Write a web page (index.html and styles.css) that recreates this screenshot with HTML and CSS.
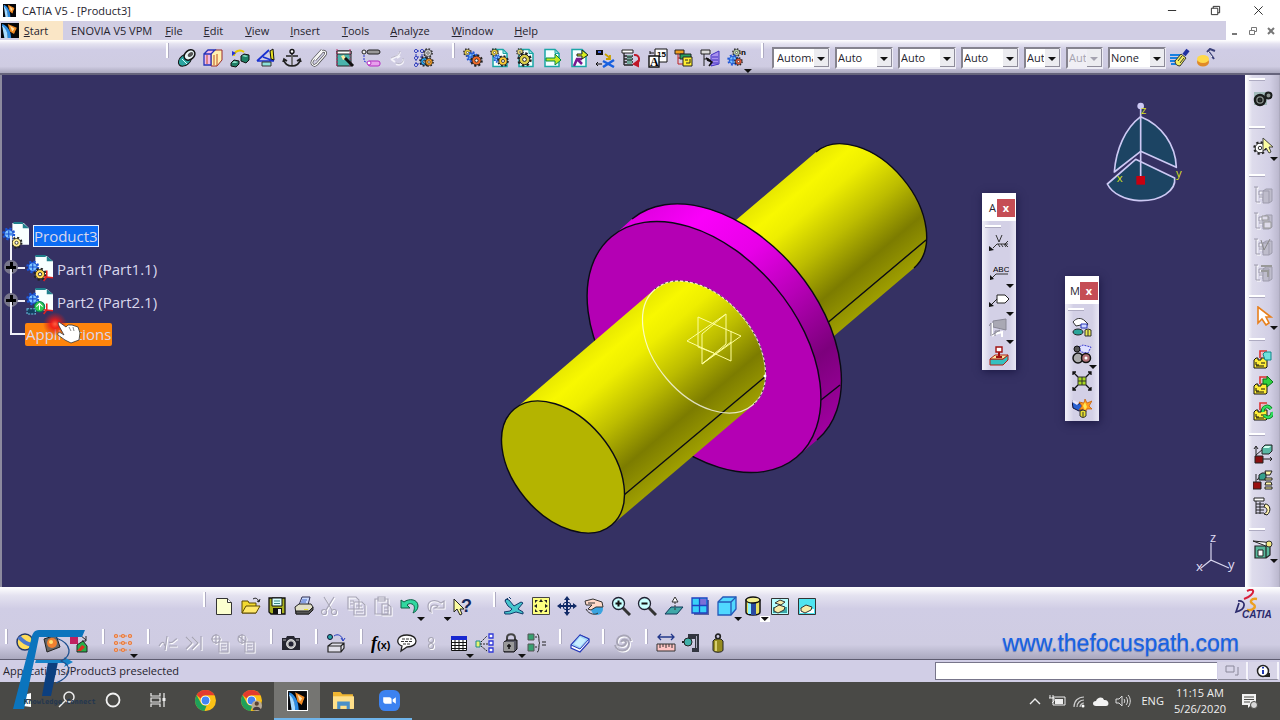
FILE: index.html
```html
<!DOCTYPE html>
<html lang="en">
<head>
<meta charset="utf-8">
<meta name="viewport" content="width=device-width, initial-scale=1">
<title>CATIA V5 - [Product3]</title>
<link rel="stylesheet" href="styles.css">
</head>
<body>
<svg class="defs" aria-hidden="true">
  <symbol id="cog" viewBox="0 0 12 12"><circle cx="6" cy="6" r="4.8" fill="none" stroke="#222" stroke-width="2" stroke-dasharray="1.900 1.870"/><circle cx="6" cy="6" r="4.100" fill="currentColor" stroke="#222" stroke-width=".8"/><circle cx="6" cy="6" r="1.500" fill="#fff" stroke="#222" stroke-width=".8"/></symbol>
  <symbol id="bluecog" viewBox="0 0 12 12"><circle cx="6" cy="6" r="4.800" fill="none" stroke="#1c55d8" stroke-width="2" stroke-dasharray="1.900 1.870"/><circle cx="6" cy="6" r="3.800" fill="#7fc4ff" stroke="#1850d0"/><path d="M3 6h6M6 3v6" stroke="#1850d0"/></symbol>
  <symbol id="catia" viewBox="0 0 16 16"><path fill="#05060a" d="M0 0h16v16H0z"/><path fill="#2b8ae0" d="M1 1c5 2 8 8 8 15H6C6 10 4 6 1 4z"/><path fill="#a8dcff" d="M1 3c3 2 5 7 5 13H3z"/><path fill="#f08a24" d="M6 1l8 4-2 7-4-3z"/><path fill="#ffe2a8" d="M8 3l4 3-2 3z"/><path fill="#05060a" d="M13 8l3-2v10h-6z"/></symbol>
  <symbol id="page" viewBox="0 0 20 20"><path fill="#f4ffff" stroke="#1aa6a6" stroke-width="1.500" d="M3 1.500h10l4 4v13H3z"/><path fill="#9fe0e0" stroke="#1aa6a6" d="M13 1.500v4h4z"/></symbol>
  <symbol id="dockgrey" viewBox="0 0 20 20"><g fill="none" stroke="#fff" transform="translate(1 1)"><path d="M1 2h4M3 2v15h4M6 6h5v4H6zM6 12h4v4"/></g><g fill="none" stroke="#9d9bac"><path d="M1 2h4M3 2v15h4M6 6h5v4H6zM6 12h4v4"/><path fill="#bebccb" d="M10 6l3-2h6v12l-3 2h-6zM10 6h6v12"/></g></symbol>
  <symbol id="chrome" viewBox="0 0 20 20"><circle cx="10" cy="10" r="10" fill="#fbc116"/><path fill="#e33b2e" d="M10 0a10 10 0 0 1 8.700 5H10a5 5 0 0 0-4.600 3L1.500 4.800A10 10 0 0 1 10 0z"/><path fill="#1fa15a" d="M1.500 4.800l4.200 7.700A5 5 0 0 0 11 15l-2 5A10 10 0 0 1 1.500 4.800z"/><circle cx="10" cy="10" r="4.600" fill="#fff"/><circle cx="10" cy="10" r="3.700" fill="#4384f3"/></symbol>
  <symbol id="yblock" viewBox="0 0 20 20"><path fill="none" stroke="#e03030" stroke-width="1.600" d="M7 9V2h7"/><path fill="none" stroke="#f9a0a0" d="M9 9V4h5"/><path fill="#ffee38" stroke="#111" d="M1 11l2-2h2v2h3V9h6v9l-1 1H1z"/><path fill="none" stroke="#111" d="M3 13v3h3M8 14h4M3 17h8"/></symbol>
</svg>

<header class="titlebar">
  <svg class="appicon" viewBox="0 0 16 16" aria-hidden="true"><use href="#catia"/></svg>
  <h1>CATIA V5 - [Product3]</h1>
  <div class="winbtns">
    <button aria-label="Minimize"><svg viewBox="0 0 12 12"><path d="M1 6h9"/></svg></button>
    <button aria-label="Restore"><svg viewBox="0 0 12 12"><path d="M1.500 3.500h7v7h-7zM3.500 3.500v-2h7v7h-2"/></svg></button>
    <button aria-label="Close"><svg viewBox="0 0 12 12"><path d="M1.500 1.500l9 9M10.500 1.500l-9 9"/></svg></button>
  </div>
</header>

<nav class="menubar" aria-label="Main menu">
  <svg class="docicon" viewBox="0 0 16 16" preserveAspectRatio="none" aria-hidden="true"><use href="#catia"/></svg>
  <button class="start"><u>S</u>tart</button>
  <button>ENOVIA V5 VPM</button>
  <button class="file"><u>F</u>ile</button>
  <button><u>E</u>dit</button>
  <button><u>V</u>iew</button>
  <button><u>I</u>nsert</button>
  <button><u>T</u>ools</button>
  <button><u>A</u>nalyze</button>
  <button><u>W</u>indow</button>
  <button><u>H</u>elp</button>
  <div class="mdibtns">
    <button aria-label="Minimize document"><svg viewBox="0 0 10 10"><path d="M2 8h5"/></svg></button>
    <button aria-label="Restore document"><svg viewBox="0 0 10 10"><path stroke-width="1" d="M1.500 4.500h5v4h-5zM3.500 4V1.500h5v4H7"/></svg></button>
    <button aria-label="Close document"><svg viewBox="0 0 10 10"><path d="M2 2l6 6M8 2l-6 6"/></svg></button>
  </div>
</nav>

<div class="toolbar top">
  <div class="group constraints">
    <button aria-label="Coincidence"><svg viewBox="0 0 20 20"><ellipse cx="8" cy="12" rx="7.500" ry="5" transform="rotate(-40 8 12)" fill="#2aa5a0" stroke="#111"/><ellipse cx="12.500" cy="7" rx="6" ry="4.500" transform="rotate(-40 12.500 7)" fill="#e8f4f4" stroke="#111" stroke-width="1.500"/><ellipse cx="13.500" cy="6.500" rx="3" ry="2" transform="rotate(-40 13.500 6.500)" fill="#555"/><path d="M5 11l5 5" stroke="#d8ffff"/></svg></button>
    <button aria-label="Contact"><svg viewBox="0 0 20 20"><path fill="#fff3b0" stroke="#9a2a2a" d="M8 6l4-4h7v10l-5 6H8z"/><path fill="#f3b8e8" stroke="#2734b8" stroke-width="1.300" d="M1 6h7v11H1zM1 6l4-4h7L8 6"/><path d="M4 7v9M11 7v10M14 6v12" stroke="#c05020"/></svg></button>
    <button aria-label="Offset"><svg viewBox="0 0 20 20"><path d="M4 8c0-5 6-7 10-4" fill="none" stroke="#e6c800" stroke-width="2"/><path fill="#1f7f66" stroke="#111" d="M11 8l3-2 5 1v5l-3 3-5-2zM1 15l3-3 5 1v3l-3 3-5-1z"/><path d="M12 8l2-1 4 1-2 1zM2 15l2-2 4 1-2 1z" fill="#8fe0c8"/><path d="M2 3l4 2-4 3z" fill="#2734d8"/></svg></button>
    <button aria-label="Angle"><svg viewBox="0 0 20 20"><path d="M1 13L13 2M1 13h17M7 9l11 4" stroke="#1830d0" stroke-width="1.700" fill="none"/><path fill="#8ce0d8" stroke="#333" d="M6 14h9v4H6z"/><path fill="#e8e020" stroke="#111" d="M14 3l3-2 1 11-3-1z"/></svg></button>
    <button aria-label="Fix"><svg viewBox="0 0 20 20"><circle cx="10" cy="3.500" r="2" fill="#fff" stroke="#111" stroke-width="1.400"/><path d="M10 6v12M4 8h12M2 12c1 5 5 6 8 6s7-1 8-6M1 14l1-3 3 2M19 14l-1-3-3 2" stroke="#222" stroke-width="1.600" fill="none"/><path d="M10 7v10" stroke="#eee" stroke-width=".6"/></svg></button>
    <button aria-label="Fix together"><svg viewBox="0 0 20 20"><path d="M6 12l7-8c2-2 5 0 3 3l-8 9c-3 3-7 0-4-4L13 2" stroke="#444" stroke-width="2.600" fill="none"/><path d="M6 12l7-8c2-2 5 0 3 3l-8 9c-3 3-7 0-4-4L13 2" stroke="#fff" stroke-width="1.200" fill="none"/></svg></button>
    <button aria-label="Quick constraint"><svg viewBox="0 0 20 20"><path fill="#4ab3ac" stroke="#222" d="M2 3h14v15H2z"/><path fill="#fff" stroke="#222" d="M2 3h14v3H2z"/><path d="M2 1v17M15 1v17" stroke="#b8306a" stroke-dasharray="2 1"/><path fill="#ffe9a0" d="M6 8l3-1 2 4-3 1z"/><path d="M10 10l8 8" stroke="#111" stroke-width="3"/></svg></button>
    <button aria-label="Flexible assembly"><svg viewBox="0 0 20 20"><rect x="6" y="2" width="13" height="4" rx="2" fill="#999" stroke="#222"/><circle cx="3" cy="4" r="2" fill="#eee" stroke="#222"/><path d="M3 7v6l4 2" stroke="#2734d8" fill="none" stroke-dasharray="2 1"/><rect x="7" y="13" width="12" height="5" rx="2" fill="#e7a0ec" stroke="#b22ac0"/><circle cx="8" cy="15" r="2" fill="#fff" stroke="#b22ac0"/></svg></button>
    <button aria-label="Change constraint" disabled><svg viewBox="0 0 20 20"><path d="M3 11c4-2 8-2 9-7M8 16c5 2 8-1 7-5M3 11l4 3M12 8l-3 2" fill="none" stroke="#f4f3fa" stroke-width="2"/><path d="M3 10c4-2 8-2 9-7M8 15c5 2 8-1 7-5" fill="none" stroke="#b6b3c4"/></svg></button>
    <button aria-label="Reuse pattern"><svg viewBox="0 0 20 20"><path d="M2 2v16M8 2v16M2 3h12M2 9h8M2 16h8" stroke="#2734b8" stroke-dasharray="3 1"/><g fill="#fff" stroke="#2734b8"><circle cx="2" cy="3" r="1.500"/><circle cx="8" cy="3" r="1.500"/><circle cx="2" cy="10" r="1.500"/><circle cx="2" cy="17" r="1.500"/></g><use href="#cog" x="9" y="0" width="10" height="10" color="#ddd"/><use href="#cog" x="5" y="8" width="11" height="11" color="#20a0f0"/><use href="#cog" x="10" y="9" width="10" height="10" color="#ffa020"/></svg></button>
  </div>
  <div class="group structure">
    <button aria-label="Component"><svg viewBox="0 0 20 20"><use href="#cog" x="0" y="0" width="9" height="9" color="#ffe040"/><use href="#bluecog" x="3" y="3" width="12" height="12"/><use href="#cog" x="7" y="6" width="13" height="13" color="#f06a28"/></svg></button>
    <button aria-label="Product"><svg viewBox="0 0 20 20"><use href="#page" width="20" height="20"/><use href="#cog" x="0" y="0" width="9" height="9" color="#ffe040"/><use href="#bluecog" x="3" y="6" width="9" height="9"/><use href="#cog" x="7" y="7" width="12" height="12" color="#ffcb30"/></svg></button>
    <button aria-label="Part"><svg viewBox="0 0 20 20"><use href="#page" width="20" height="20"/><use href="#cog" x="0" y="0" width="8" height="8" color="#ffee80"/><use href="#cog" x="1" y="4" width="15" height="15" color="#ddd04a"/></svg></button>
    <button aria-label="Existing component"><svg viewBox="0 0 20 20"><use href="#page" width="20" height="20"/><path fill="#c9e820" stroke="#084" d="M4 10h9V6l6 6-6 5v-4H4z"/></svg></button>
    <button aria-label="Existing component with positioning"><svg viewBox="0 0 20 20"><use href="#page" width="20" height="20"/><path d="M5 18l3-7 5 0M8 11l5 5" stroke="#7a1890" stroke-width="2.500" fill="none"/><path fill="#d8f020" stroke="#222" d="M8 6h5V2l6 5-6 4V8H8z"/></svg></button>
    <button aria-label="Replace component"><svg viewBox="0 0 20 20"><path fill="#111" d="M1 2h7v5H1z"/><path fill="#4060e0" d="M3 3h3v2H3z"/><path d="M10 6l5 4M15 7v4h-4" stroke="#c8a000" stroke-width="1.800" fill="none"/><path d="M1 16h6M1 16l2-2M1 16l2 2" stroke="#111"/><path d="M8 13l11 6M19 12l-11 7" stroke="#1860e0" stroke-width="2.500"/></svg></button>
    <button aria-label="Graph tree reordering"><svg viewBox="0 0 20 20"><path fill="#fff" stroke="#222" d="M1 2h11v3H1z"/><path d="M3 5v12M3 8h9M3 11h9M3 14h9M3 17h9" stroke="#222" stroke-width="1.300"/><path d="M6 7h5v9H6z" fill="#6fa89a"/><path d="M6 9h5M6 12h5" stroke="#222"/><path d="M13 7c6-1 7 7 1 9M13 16l4-3v5z" fill="none" stroke="#c01828" stroke-width="2"/></svg></button>
    <button aria-label="Generate numbering"><svg viewBox="0 0 20 20"><path fill="#fff" stroke="#111" d="M7 1h12v13H7z"/><text x="9" y="9" class="ic8">15</text><path fill="#fff" stroke="#111" stroke-width="1.400" d="M1 8h10v11H1z"/><text x="2" y="18" class="serif">A</text><path d="M2 5h4M2 3v3" stroke="#111"/></svg></button>
    <button aria-label="Selective load"><svg viewBox="0 0 20 20"><path fill="#f0a020" stroke="#222" d="M1 2h9v4H1z"/><path d="M4 6v10h5M4 10h4" stroke="#c02020" fill="none"/><path fill="#28a05c" stroke="#222" d="M6 6h11v5H6z"/><path fill="#ffee30" stroke="#222" d="M9 9h9v9H9z"/><path d="M11 12h3M12 15h4v-4" stroke="#222" fill="none"/></svg></button>
    <button aria-label="Manage representations"><svg viewBox="0 0 20 20"><path d="M1 2h9v4H1zM4 6v12M4 11h5" stroke="#222" fill="#ddd"/><path fill="#a890ee" stroke="#4030c0" d="M11 7l8-4v13l-8 2z"/><path d="M12 9h6M12 12h6M12 15h6" stroke="#4030c0"/><path d="M7 12l5 2-3 4M6 10l5 3" stroke="#111" stroke-width="1.500" fill="none"/></svg></button>
    <button class="drop" aria-label="Multi instantiation"><svg viewBox="0 0 20 20"><use href="#cog" x="5" y="0" width="9" height="9" color="#c8e0b0"/><use href="#bluecog" x="0" y="6" width="12" height="12"/><use href="#cog" x="7" y="9" width="9" height="9" color="#f05a38"/><text x="14" y="7" class="ic8">n</text></svg></button>
  </div>
  <div class="group combos">
    <span class="combo first"><select aria-label="Fill colour"><option>Automatic</option></select></span>
    <span class="combo"><select aria-label="Transparency"><option>Auto</option></select></span>
    <span class="combo"><select aria-label="Line thickness"><option>Auto</option></select></span>
    <span class="combo"><select aria-label="Line type"><option>Auto</option></select></span>
    <span class="combo small"><select aria-label="Point symbol"><option>Auto</option></select></span>
    <span class="combo small"><select aria-label="Rendering style" disabled><option>Auto</option></select></span>
    <span class="combo layer"><select aria-label="Layer"><option>None</option></select></span>
    <button aria-label="Painter"><svg viewBox="0 0 20 20"><path d="M0 7h10M0 10h9M0 13h9M1 16h10" stroke="#1880e0" stroke-width="2"/><path fill="#f4ee60" stroke="#333" d="M5 13l6-7 5 4-6 8c-3 0-5-2-5-5z"/><path d="M8 13l4-5M10 15l4-5" stroke="#333"/><path d="M14 7l4-5" stroke="#2030a0" stroke-width="4"/></svg></button>
    <button aria-label="Wizard"><svg viewBox="0 0 20 20"><ellipse cx="7" cy="14" rx="6" ry="4.500" fill="#e08a28"/><ellipse cx="7" cy="11" rx="6" ry="4" fill="#ffd94a"/><path d="M11 4l3-3 5 2M13 4l5 7" stroke="#3a3f78" stroke-width="2" fill="none"/><path d="M12 4l4 5" stroke="#fff"/></svg></button>
  </div>
</div>

<main class="work">
  <section class="viewport" aria-label="3D view">
    <svg class="model" viewBox="0 75 1245 512" role="img" aria-label="Shaft with disc">
      <defs>
        <linearGradient id="shaft" gradientUnits="userSpaceOnUse" x1="514" y1="409" x2="612" y2="525"><stop offset="0" stop-color="#e8e800"/><stop offset=".12" stop-color="#f8f800"/><stop offset=".25" stop-color="#eeee00"/><stop offset=".5" stop-color="#bcbc00"/><stop offset=".76" stop-color="#7c7c00"/><stop offset="1" stop-color="#a0a000"/></linearGradient>
        <linearGradient id="rim" gradientUnits="userSpaceOnUse" x1="632" y1="219" x2="817" y2="440"><stop offset="0" stop-color="#e000e0"/><stop offset=".15" stop-color="#fa00fa"/><stop offset=".35" stop-color="#e800e8"/><stop offset=".55" stop-color="#b800b8"/><stop offset=".78" stop-color="#7c007c"/><stop offset="1" stop-color="#a000a0"/></linearGradient>
      </defs>
      <g stroke-width="1.400">
        <path fill="url(#shaft)" d="M655 289L816 152A75.700 49 50 0 1 914 268L753 405z"/>
        <path fill="none" stroke="#0a0a14" d="M816 152A75.700 49 50 0 1 914 268M926 240L800 346"/>
        <path fill="url(#rim)" d="M612 237L632 219A144 93.200 50 0 1 817 440L797 457z"/>
        <path fill="none" stroke="#0a0a14" d="M632 219A144 93.200 50 0 1 817 440M821 400L840 385"/>
        <ellipse cx="704" cy="347" rx="144" ry="93.200" transform="rotate(50 704 347)" fill="#b400b4" stroke="#0a0a14"/>
        <path fill="url(#shaft)" d="M515 409L655 289A75.700 49 50 0 1 753 405L612 525z"/>
        <path stroke="#0a0a14" d="M624 495L766 376"/>
        <ellipse cx="563" cy="467" rx="75.700" ry="49" transform="rotate(50 563 467)" fill="#b4b400" stroke="#0a0a14"/>
        <ellipse cx="704" cy="347" rx="75.700" ry="49" transform="rotate(50 704 347)" fill="none" stroke="#fff" stroke-width="1.200" stroke-opacity=".75"/>
        <path fill="none" stroke="#222" stroke-width="1" stroke-dasharray="2 3" d="M655 289A75.700 49 50 0 1 753 405"/>
      </g>
      <path fill="none" stroke="#ffff9c" d="M698 317v30l16 6M698 317l43 19-39 28v-30l24-20v30l-24 20M687 341l39-27M687 341l44 20v-30M702 364l29-22"/>
      <circle cx="765" cy="376" r="1.500" fill="#fff"/>
    </svg>

    <ul class="tree">
      <li class="root">
        <svg viewBox="0 0 26 26"><path fill="#f8ffff" d="M10 1h11l5 5v16H10z"/><path fill="#207f8c" d="M11 0h9v2h-9zM20 1l6 5h-6z"/><use href="#bluecog" x="0" y="5" width="13" height="13"/><use href="#cog" x="8" y="14" width="12" height="12" color="#ffef90"/></svg>
        <span class="sel">Product3</span>
      </li>
      <li>
        <i class="plus"></i>
        <svg viewBox="0 0 26 26"><path fill="#f8ffff" d="M9 1h11l6 5v16H9z"/><path fill="#207f8c" d="M9 0h10v2H9zM20 1l6 5h-6z"/><use href="#bluecog" x="0" y="5" width="13" height="13"/><use href="#cog" x="7" y="12" width="13" height="13" color="#ffd850"/><path d="M17 21l9 1M20 15v6l-3 4" stroke="#e02020" stroke-width="1.500" fill="none"/></svg>
        <span>Part1 (Part1.1)</span>
      </li>
      <li>
        <i class="plus"></i>
        <svg viewBox="0 0 26 26"><path fill="#f8ffff" d="M9 1h11l6 5v16H9z"/><path fill="#207f8c" d="M9 0h10v2H9zM20 1l6 5h-6z"/><use href="#bluecog" x="0" y="4" width="13" height="13"/><circle cx="13" cy="18" r="5" fill="#30c850" stroke="#075"/><path d="M10 18l3-3 3 3M13 15v6" stroke="#fff" fill="none"/><path d="M1 20h8v5H1z" fill="#123f60" stroke="#6bc0e0" stroke-dasharray="2 1"/><path d="M17 21l9 1M20 15v6l-3 4" stroke="#e02020" stroke-width="1.500" fill="none"/></svg>
        <span>Part2 (Part2.1)</span>
      </li>
      <li><span class="app">Applications</span></li>
    </ul>
    <svg class="pointer" viewBox="0 0 50 36" aria-hidden="true"><defs><radialGradient id="click"><stop offset="0" stop-color="#ff6040"/><stop offset=".35" stop-color="#f01818" stop-opacity=".9"/><stop offset="1" stop-color="#c02020" stop-opacity="0"/></radialGradient></defs><circle cx="13" cy="13" r="12" fill="url(#click)"/><path fill="#fff" stroke="#333" stroke-width=".8" d="M17 11l7 5 2-2 4 0 3 1 3 1 2 6-1 7-8 3-6-3-7-5c-1-2 1-3 3-2l3 2-5-9c-1-2-1-4 0-4z"/><path d="M27 16l2 4M31 16l1 4" stroke="#888"/></svg>

    <svg class="compass" viewBox="0 0 330 360" aria-label="Compass"><g fill="#1c4463" stroke="#cdc9f4" stroke-width="5" stroke-linejoin="round"><path d="M152 80C105 115 78 180 73 246L152 184l107 48C257 165 215 105 152 80z"/><path d="M137 208L52 282c15 30 55 48 95 50 65 2 112-30 107-68z"/><path d="M152 50v210" fill="none"/></g><circle cx="152" cy="48" r="10" fill="#cdc9f4"/><path fill="#c80010" d="M139 258h26v26h-26z"/><g fill="#d8e020" class="axis-lg"><text x="153" y="73">z</text><text x="80" y="276">x</text><text x="258" y="262">y</text></g></svg>

    <svg class="triad" viewBox="0 0 44 50" aria-label="Axes"><path d="M17 18v17l18 8M17 35L7 43" fill="none" stroke="#d8d6ee" stroke-width="1.200"/><g fill="#e0def4" class="axis-sm"><text x="16" y="17">z</text><text x="2" y="46">x</text><text x="34" y="44">y</text></g></svg>

    <aside class="palette annotations" aria-label="Annotations">
      <div class="ptitle"><b>A</b><button aria-label="Close Annotations">x</button></div>
      <div class="ptools">
        <button aria-label="Weld feature"><svg viewBox="0 0 20 20"><path d="M7 1l3 7 3-7M4 14l4-4h11M9 10l2 3M12 10l2 3M15 10l2 3M19 7l-3 3 3 3" fill="none" stroke="#333"/><path fill="#111" d="M0 17v-5l5 4z"/></svg></button>
        <button class="drop" aria-label="Text with leader"><svg viewBox="0 0 20 20"><text x="4" y="10" class="ic9">ABC</text><path d="M3 16l4-4h12" fill="none" stroke="#333"/><path fill="#111" d="M1 18v-5l4 4z"/></svg></button>
        <button class="drop" aria-label="Flag note"><svg viewBox="0 0 20 20"><path d="M8 5h8l4 4-4 4H8zM8 9l-6 6" fill="#fff" stroke="#222"/><path fill="#111" d="M0 17v-5l5 4z"/></svg></button>
        <button class="drop" aria-label="View"><svg viewBox="0 0 20 20"><path fill="#a9a8b4" stroke="#888795" d="M4 3l13-2v11L4 9z"/><path fill="none" stroke="#fff" stroke-width="2" d="M3 18V5M3 18l8-5M6 16l7-2v5"/><path fill="none" stroke="#888795" d="M2 18V5l-2 3M3 17l8-5M6 18v-5h5"/></svg></button>
        <button aria-label="3D annotation"><svg viewBox="0 0 20 20"><path fill="#35c0c0" stroke="#b02010" d="M1 13h13l5-4v5l-5 5H1z"/><path fill="#f4e6a0" stroke="#b02010" d="M1 13l5-4h13l-5 4z"/><path fill="#fff" stroke="#a01010" stroke-width="1.400" d="M7 1h6v5H7z"/><path d="M10 6v5M7 11h6" stroke="#a01010" stroke-width="2"/></svg></button>
      </div>
    </aside>

    <aside class="palette move" aria-label="Move">
      <div class="ptitle"><b>M</b><button aria-label="Close Move">x</button></div>
      <div class="ptools">
        <button aria-label="Manipulation"><svg viewBox="0 0 20 20"><path fill="#fff" stroke="#333" d="M1 5c3-4 8-5 12-1l3 3-3 4-4-3-5 1z"/><path fill="#cfd8ff" stroke="#2734b8" d="M9 7h6v4H9z"/><ellipse cx="6" cy="15" rx="5" ry="3" fill="#2aa59a" stroke="#222"/><path fill="#e8e850" stroke="#333" d="M13 13l3-1 3 1v6h-6zM16 13v6"/></svg></button>
        <button class="drop" aria-label="Snap"><svg viewBox="0 0 20 20"><path fill="#dfe0ff" stroke="#3a3ad0" stroke-dasharray="2 1" d="M7 3l4-2 8 2-3 6-7-1z"/><circle cx="5" cy="5" r="3" fill="#555" stroke="#111"/><circle cx="6" cy="14" r="5" fill="#aaa" stroke="#111" stroke-width="1.500"/><circle cx="14" cy="14" r="4.500" fill="#b07078" stroke="#111" stroke-width="1.500"/><circle cx="14" cy="14" r="1.500" fill="#fff"/></svg></button>
        <button aria-label="Explode"><svg viewBox="0 0 20 20"><path d="M1 1l5 5M19 1l-5 5M1 19l5-5M19 19l-5-5M1 4V1h3M16 1h3v3M1 16v3h3M16 19h3v-3" stroke="#111" fill="none" stroke-width="1.300"/><path fill="#a8d820" stroke="#333" d="M6 6h8v8H6zM10 6v8M6 10h8"/></svg></button>
        <button aria-label="Stop on clash"><svg viewBox="0 0 20 20"><path fill="#2860d0" stroke="#113" d="M0 3l6 3 4-1 1 6-4 2-6-3z"/><path fill="#e8e6fa" d="M1 2l6 3-2 2-5-3z"/><path fill="#ff9a20" stroke="#c05a00" stroke-width=".7" d="M13 1l2 4 5-2-3 5 3 3-5 0-2 4-2-4-4 1 3-4-3-4 5 1z"/><path fill="#ffe850" d="M13 4l2 5-2 3-2-4z"/><path fill="#e8e030" stroke="#333" d="M8 13l3-1 3 1v5l-3 2-3-2zM11 14v5"/></svg></button>
      </div>
    </aside>
  </section>

  <aside class="dock" aria-label="Product tools">
    <div class="vgroup roomy"><button aria-label="Workbench"><svg viewBox="0 0 20 20"><path fill="#7fa99c" d="M1 3h13v13H1z" opacity=".6"/><g fill="#8b938f" stroke="#1a1d1c" stroke-width="2"><circle cx="7" cy="11" r="5" stroke-width="2.500"/><circle cx="7" cy="11" r="1.500"/><circle cx="15.500" cy="6.500" r="3"/></g></svg></button></div>
    <div class="vgroup roomy"><button class="drop" aria-label="Select product"><svg viewBox="0 0 20 20"><use href="#cog" x="0" y="4" width="14" height="14" color="#fff"/><path fill="#fbfca0" stroke="#444" d="M10 1v13l3-3 3 5 2-1-2-5h4z"/></svg></button></div>
    <div class="vgroup">
      <button disabled aria-label="Load"><svg viewBox="0 0 20 20"><use href="#dockgrey" width="20" height="20"/></svg></button>
      <button disabled aria-label="Unload"><svg viewBox="0 0 20 20"><use href="#dockgrey" width="20" height="20"/><path d="M9 5h6v4H9zM11 11h7v6h-7z" fill="#dedbea" stroke="#999"/></svg></button>
      <button disabled aria-label="Activate"><svg viewBox="0 0 20 20"><use href="#dockgrey" width="20" height="20"/><path d="M8 3l3 10 6-11" fill="none" stroke="#888"/></svg></button>
      <button disabled aria-label="Deactivate"><svg viewBox="0 0 20 20"><use href="#dockgrey" width="20" height="20"/><path d="M8 3h11M8 8h7v6" fill="none" stroke="#999" stroke-width="2"/></svg></button>
    </div>
    <div class="vgroup"><button class="drop" aria-label="Select"><svg viewBox="0 0 20 20"><path fill="#fff" stroke="#e8801c" stroke-width="1.600" d="M5 1v16l4-4 4 6 3-2-3-6h5z"/></svg></button></div>
    <div class="vgroup">
      <button aria-label="Publish"><svg viewBox="0 0 20 20"><use href="#yblock" width="20" height="20"/><path fill="#70e0dc" stroke="#108888" d="M10 5l2-2h6v8h-6z"/></svg></button>
      <button aria-label="Send"><svg viewBox="0 0 20 20"><use href="#yblock" width="20" height="20"/><path fill="#30d040" stroke="#087818" d="M10 4h4V1l6 6-6 5V9h-4z"/></svg></button>
      <button aria-label="Synchronise"><svg viewBox="0 0 20 20"><use href="#yblock" width="20" height="20"/><path d="M18 8c-3-5-9-2-8 3M11 14c4 5 9 1 8-3" fill="none" stroke="#087818" stroke-width="3.500"/><path d="M18 8c-3-5-9-2-8 3M11 14c4 5 9 1 8-3" fill="none" stroke="#30e060" stroke-width="2"/></svg></button>
    </div>
    <div class="vgroup">
      <button aria-label="Translate"><svg viewBox="0 0 20 20"><path d="M3 13V3M1 5l2-3 2 3M3 11l7-6M9 15h10M17 13l2 2-2 2" stroke="#222" fill="none"/><path fill="#58b8a4" stroke="#222" d="M9 4l3-3h7v6l-3 3H9z"/><path fill="#d4fff0" d="M10 4l2-2h6l-2 2z"/><path fill="#8a1010" stroke="#222" d="M2 12h8v7H2z"/></svg></button>
      <button aria-label="Compare"><svg viewBox="0 0 20 20"><path d="M3 12V4M4 10l5-6" stroke="#222"/><path fill="#35a08c" stroke="#222" d="M6 5l3-2h4v7H6z"/><path fill="#981010" stroke="#222" d="M0 12h8v7H0z"/><path fill="#fff7a8" stroke="#222" d="M12 1h7l-2 4h-4zM12 8h7v2h-7zM13 12h5l1 3h-7zM12 17h7v2h-7z"/></svg></button>
      <button aria-label="Tree update"><svg viewBox="0 0 20 20"><path fill="#fff" stroke="#222" d="M1 2h10v3H1z"/><path d="M3 5v13M3 8h8M3 11h8M3 14h8M3 17h8M7 6v12" stroke="#222"/><path fill="#fff4b0" stroke="#222" d="M12 8c5 0 7 7 2 11l-3-1c4-2 4-6 0-7z"/></svg></button>
    </div>
    <div class="vgroup"><button class="drop" aria-label="Catalog"><svg viewBox="0 0 20 20"><path fill="#58b89c" stroke="#222" stroke-width="1.200" d="M2 7h11v12H2zM13 7l4-2v11l-4 3"/><path fill="#fff" stroke="#222" d="M0 2l13 5 5-3-7-1zM5 11h5v6H5z"/><circle cx="16" cy="5" r="3" fill="#f0e880" stroke="#333"/></svg></button></div>
  </aside>
</main>

<div class="toolbar bottom">
  <div class="row one">
    <div class="group std">
      <button aria-label="New"><svg viewBox="0 0 20 20"><path fill="#fcffd0" stroke="#333" d="M2.500 2.500h11l4 4v12h-15z"/><path fill="#fff" stroke="#333" d="M13.500 2.500v4h4"/></svg></button>
      <button aria-label="Open"><svg viewBox="0 0 20 20"><path fill="#f2d930" stroke="#5c4b00" d="M1 5h6l1 2h7v10H1z"/><path fill="#ffe86a" stroke="#5c4b00" d="M1 17l4-7h14l-4 7z"/><path d="M12 3c3-2 5 0 6 3M16 5l2 1 1-3" stroke="#222" fill="none"/></svg></button>
      <button aria-label="Save"><svg viewBox="0 0 20 20"><path fill="#a8b020" stroke="#111" stroke-width="1.300" d="M2 2h16v16H4l-2-2z"/><path fill="#d8ffff" stroke="#111" d="M5 2h10v8H5z"/><path fill="#111" d="M6 12h9v6H6z"/><path fill="#eee" d="M11 13h3v5h-3z"/><path d="M7 5h6M7 7.500h6" stroke="#3a8888"/></svg></button>
      <button aria-label="Print"><svg viewBox="0 0 20 20"><path fill="#c9d9ff" stroke="#335" d="M5 9l3-8h8l-2 8z"/><path fill="#e2e0c8" stroke="#222" d="M1 11l4-3h12l2 3-4 7H2z"/><path fill="#555" stroke="#222" d="M2 15h13l4-4v3l-4 4H2z"/><path d="M8 4h5M7 6h5" stroke="#4468c8"/><path fill="#e8e030" d="M10 13h4v1h-4z"/></svg></button>
      <button disabled aria-label="Cut"><svg viewBox="0 0 20 20" class="off"><path d="M4 1l8 13M14 1L6 14"/><circle cx="4" cy="16" r="2.500"/><circle cx="14" cy="16" r="2.500"/></svg></button>
      <button disabled aria-label="Copy"><svg viewBox="0 0 20 20" class="off"><path d="M1 1h8l3 3v9H1zM7 6h8l3 3v10H7zM9 10h6M9 13h7M9 16h7M3 5h4M3 8h3"/></svg></button>
      <button disabled aria-label="Paste"><svg viewBox="0 0 20 20" class="off"><path d="M2 3h13v15H2zM5 1h7v4H5zM9 8h6l3 3v8H9zM11 12h4M11 15h5"/></svg></button>
      <button class="drop" aria-label="Undo"><svg viewBox="0 0 20 20"><path fill="#30d8a0" stroke="#0c6044" d="M1 12V4l3 2c5-4 14-3 14 4 0 4-3 6-5 7 2-4 2-8-1-9-2-1-4 0-5 1l3 3z"/></svg></button>
      <button disabled class="drop" aria-label="Redo"><svg viewBox="0 0 20 20" class="off"><path d="M18 12V5l-3 2C10 3 2 4 2 10c0 3 1 5 3 6-1-4 0-7 3-7 2 0 3 0 4 1l-3 2z"/></svg></button>
      <button aria-label="What's this"><svg viewBox="0 0 20 20"><path fill="#fbfca0" stroke="#222" d="M1 3v13l3-3 3 6 2-1-2-5h4z"/><text x="8" y="16" class="ic20">?</text></svg></button>
    </div>
    <div class="group viewtools">
      <button aria-label="Fly mode"><svg viewBox="0 0 20 20"><path fill="#45c4cc" stroke="#113a6a" d="M2 3l3 1 5 6 7-4 2 1-5 6 5 3 0 2-7-2-6 2-5 0-1-2 6-1 2-2-4-3-3-5z"/><path d="M4 2l-3 3M5 1l2 2" stroke="#113a6a"/></svg></button>
      <button aria-label="Fit all in"><svg viewBox="0 0 20 20"><path fill="#fdff80" stroke="#444" d="M1.500 1.500h17v17h-17z"/><path fill="#222" d="M4 4h3L4 7zM16 4v3l-3-3zM4 16v-3l3 3zM16 16h-3l3-3zM10 3l2 3H8zM10 17l-2-3h4zM3 10l3-2v4zM17 10l-3 2V8z"/></svg></button>
      <button aria-label="Pan"><svg viewBox="0 0 20 20"><path d="M10 3v14M3 10h14" stroke="#112a66" stroke-width="2"/><path fill="#112a66" d="M10 0l3 4H7zM10 20l-3-4h6zM0 10l4-3v6zM20 10l-4 3V7z"/><circle cx="10" cy="10" r="4" fill="none" stroke="#112a66"/></svg></button>
      <button aria-label="Rotate"><svg viewBox="0 0 20 20"><circle cx="13" cy="13" r="6" fill="#3aa4e0"/><path fill="#ffd9c8" stroke="#333" d="M1 5l8-2 9 3 1 5-7 0-5 3-3-1 4-4-6 0z"/><path d="M4 7h7M2 13c3 6 10 6 12 4" stroke="#333" fill="none"/></svg></button>
      <button aria-label="Zoom in"><svg viewBox="0 0 20 20"><path d="M11 11l8 8" stroke="#333" stroke-width="3"/><circle cx="7.500" cy="7.500" r="6" fill="#c8ffff" stroke="#223" stroke-width="1.300"/><path d="M4.500 7.500h6M7.500 4.500v6" stroke="#111" stroke-width="2"/></svg></button>
      <button aria-label="Zoom out"><svg viewBox="0 0 20 20"><path d="M11 11l8 8" stroke="#333" stroke-width="3"/><circle cx="7.500" cy="7.500" r="6" fill="#c8ffff" stroke="#223" stroke-width="1.300"/><path d="M4.500 7.500h6" stroke="#111" stroke-width="2"/></svg></button>
      <button aria-label="Normal view"><svg viewBox="0 0 20 20"><path fill="#40a8a8" stroke="#113a5a" d="M1 18l6-7h12l-6 7z"/><path d="M11 14V3" stroke="#333" stroke-dasharray="2 1"/><path fill="#fff" stroke="#333" d="M11 1l3 5H8z"/></svg></button>
      <button aria-label="Multi view"><svg viewBox="0 0 20 20"><path fill="#5a64a0" d="M4 4h15v15H4z"/><path fill="#38d0f8" stroke="#2040c0" stroke-width="1.300" d="M2 2h15v15H2z"/><path fill="#7c70d8" d="M10 3h6v6h-6z"/><path d="M9.500 2v15M2 9.500h15" stroke="#2040c0" stroke-width="1.300"/></svg></button>
      <button class="drop" aria-label="Isometric view"><svg viewBox="0 0 20 20"><path fill="#50d8ff" stroke="#2458b8" stroke-width="1.300" d="M1 6l5-5h13v12l-5 6H1z"/><path fill="none" stroke="#2458b8" stroke-width="1.300" d="M1 6h13v13M14 6l5-5"/></svg></button>
      <button class="drop lit" aria-label="Shading"><svg viewBox="0 0 20 20"><path fill="#e8e060" stroke="#111" stroke-width="1.500" d="M3 4v12c0 4 14 4 14 0V4z"/><path fill="#2848a0" d="M8 7h5v12H8z"/><path fill="#8cf0ff" d="M5 7h3v11H5z"/><ellipse cx="10" cy="4" rx="7" ry="3" fill="#f4f090" stroke="#111" stroke-width="1.300"/></svg></button>
      <button aria-label="Hide/Show"><svg viewBox="0 0 20 20"><path fill="#b5ffff" stroke="#333" d="M1.500 2.500h17v16h-17z"/><path fill="#3aa8a8" d="M3 11h14v6H3z"/><path fill="#f6eca8" stroke="#333" d="M5 7l5-3 5 2-4 3zM4 12l5-3 6 2-1 3-6 3-4-2z"/></svg></button>
      <button aria-label="Swap visible space"><svg viewBox="0 0 20 20"><path fill="#4fe4f0" stroke="#333" d="M1.500 2.500h17v16h-17z"/><path fill="#fff" d="M3 13h14v4H3z"/><path fill="#f6eca8" stroke="#333" d="M4 12l5-3 6 2-1 3-6 3-4-2z"/></svg></button>
    </div>
  </div>
  <div class="row two">
    <div class="group">
      <button aria-label="Environment"><svg viewBox="0 0 20 20"><circle cx="9" cy="9" r="8" fill="#ffdc58" stroke="#23386a" stroke-width="1.500"/><path d="M3 4c4 5 8 7 13 8" stroke="#4a78d0" stroke-width="4"/></svg></button>
      <button aria-label="Render"><svg viewBox="0 0 20 20"><path fill="#666" stroke="#222" d="M2 6l12-4 4 12-13 5z"/><circle cx="10" cy="10" r="5" fill="#f08030"/><circle cx="9" cy="9" r="2" fill="#ffe070"/></svg></button>
      <button aria-label="Material"><svg viewBox="0 0 20 20"><path fill="#c02060" d="M2 4h8v7H2z"/><path d="M12 2l6 5M18 3v5h-4" stroke="#222" fill="none"/><path fill="#28b048" stroke="#222" d="M9 12l6-4 4 5v6H9z"/><path fill="#e03020" d="M9 18l5-6 3 2-4 4z"/></svg></button>
    </div>
    <div class="group"><button class="drop" aria-label="Pattern"><svg viewBox="0 0 20 20"><g stroke="#e87838" fill="none" stroke-width="1.200"><path d="M1 3h17M1 10h17M1 17h17" stroke-dasharray="3 2"/><g fill="#f8c0a0"><circle cx="3" cy="3" r="1.500"/><circle cx="10" cy="3" r="1.500"/><circle cx="17" cy="3" r="1.500"/><circle cx="3" cy="10" r="1.500"/><circle cx="10" cy="10" r="1.500"/><circle cx="17" cy="10" r="1.500"/><circle cx="3" cy="17" r="1.500"/><circle cx="10" cy="17" r="1.500"/></g></g></svg></button></div>
    <div class="group">
      <button disabled aria-label="Cut part"><svg viewBox="0 0 20 20" class="off"><path d="M1 13c3-5 5-5 6 0M9 3L7 17M11 9c4 3 6-4 8-3M11 13h8"/></svg></button>
      <button disabled aria-label="Step"><svg viewBox="0 0 20 20" class="off"><path d="M2 4l6 6-6 6M8 4l6 6-6 6M17 3v14"/></svg></button>
      <button disabled aria-label="Explore"><svg viewBox="0 0 20 20" class="off"><circle cx="6" cy="6" r="4"/><path d="M1 6h10M6 1v10M9 9h9v10H9zM11 12h5M11 15h5"/></svg></button>
      <button disabled aria-label="Report"><svg viewBox="0 0 20 20" class="off"><circle cx="6" cy="6" r="4"/><path d="M2 3l8 6M6 1v10M9 9h9v10H9zM11 12h5M11 15h5"/></svg></button>
    </div>
    <div class="group"><button aria-label="Capture"><svg viewBox="0 0 20 20"><path fill="#262630" d="M1 5h4l1-2h7l1 2h5v12H1z"/><circle cx="10" cy="11" r="4.500" fill="#bbb" stroke="#fff" stroke-width=".7"/><circle cx="10" cy="11" r="2.500" fill="#223"/><path d="M2 7h3M15 7h3" stroke="#aaa"/></svg></button></div>
    <div class="group"><button aria-label="Insert block"><svg viewBox="0 0 20 20"><circle cx="4" cy="4" r="2.500" fill="#28a5a8" stroke="#113"/><path d="M8 3c4-3 8 0 9 4M15 5l2 3 2-3" stroke="#2038c0" fill="none"/><path fill="#e0dfe9" stroke="#222" stroke-width="1.200" d="M2 13l4-3h12v5l-3 4H2zM2 13h13v6M15 13l3-3"/></svg></button></div>
    <div class="group">
      <button aria-label="Formula"><svg viewBox="0 0 20 20"><text x="0" y="16" class="icfx">f<tspan class="arg">(x)</tspan></text></svg></button>
      <button aria-label="Comment"><svg viewBox="0 0 20 20"><path fill="#fff" stroke="#222" stroke-width="1.300" d="M10 2c12 0 12 12 0 12l-6 4 1-5C-2 10 0 2 10 2z"/><path d="M5 6h10M4 8.500h12M6 11h8" stroke="#333" stroke-dasharray="3 1"/></svg></button>
      <button disabled aria-label="Links"><svg viewBox="0 0 20 20" class="off"><circle cx="8" cy="7" r="2.500"/><circle cx="8" cy="13" r="2.500"/></svg></button>
      <button class="drop" aria-label="Design table"><svg viewBox="0 0 20 20"><path fill="#fff" stroke="#111" d="M2.500 3.500h15v14h-15z"/><path fill="#1828d0" d="M2 3h16v4H2z"/><path d="M2 9.500h16M2 12.500h16M2 15.500h16M6 7v11M10 7v11M14 7v11" stroke="#111"/></svg></button>
      <button aria-label="Knowledge inspector"><svg viewBox="0 0 20 20"><path fill="#e8f470" stroke="#1b8a8a" d="M1 8h4v6H1z"/><path d="M5 11h8M6 9l6-6M6 13l6 5" stroke="#222" stroke-dasharray="2 1"/><path fill="#fff" stroke="#3038d8" stroke-width="1.300" d="M14 1h4v4h-4zM14 8h4v4h-4zM14 15h4v4h-4z"/></svg></button>
      <button class="drop" aria-label="Lock"><svg viewBox="0 0 20 20"><path d="M6 9V5c0-5 8-5 8 0v4" fill="none" stroke="#444" stroke-width="2"/><path fill="#5a5a66" stroke="#111" d="M3 9l3-2h10v9l-3 3H3z"/><path fill="#999" d="M3 9h10v9H3z"/><path d="M8 11v5M6 13h4" stroke="#111" stroke-width="1.500"/></svg></button>
      <button aria-label="Equivalent dimensions"><svg viewBox="0 0 20 20"><path fill="#38a070" stroke="#555" d="M1 1h6v6H1zM1 11h6v7H1z"/><path d="M10 1c3 0 1 9 3 9-2 0 0 9-3 9M15 9h4M15 12h4M8 4h2M8 14h2" stroke="#222" fill="none"/></svg></button>
    </div>
    <div class="group near"><button aria-label="Catalog browser"><svg viewBox="0 0 20 20"><path fill="#fff" stroke="#2638b8" stroke-width="1.200" d="M1 12L10 2l9 4v3l-9 10-9-4z"/><path fill="#9fd2f4" stroke="#2638b8" d="M1 12L10 2l9 4-9 10z"/><path fill="#c8eeff" d="M4 11l6-7 6 3-6 7z"/></svg></button></div>
    <div class="group near"><button disabled aria-label="Update"><svg viewBox="0 0 20 20" class="off thick"><path d="M18 8C16 0 4 1 4 9c0 5 8 5 9 1 0-3-4-3-5-1M2 12c2 8 14 7 14-1 0-5-6-6-8-2"/></svg></button></div>
    <div class="group near">
      <button aria-label="Measure between"><svg viewBox="0 0 20 20"><path d="M2 4h16M5 1L2 4l3 3M15 1l3 3-3 3" stroke="#23388a" fill="none" stroke-width="1.300"/><path fill="#ffc4c4" stroke="#333" d="M1 11h18v7H1z"/><path d="M4 11v4M7 11v3M10 11v4M13 11v3M16 11v4" stroke="#333"/></svg></button>
      <button aria-label="Measure item"><svg viewBox="0 0 20 20"><path fill="#333640" d="M6 1h11v18h-7v-4h3V6H9v2H6z"/><circle cx="6" cy="9" r="4" fill="#40b0a8" stroke="#222"/><path fill="#aab" d="M14 3h1v12h-1z"/><path d="M0 9h2" stroke="#222" stroke-width="2"/></svg></button>
      <button aria-label="Measure inertia"><svg viewBox="0 0 20 20"><circle cx="10" cy="3.500" r="2.300" fill="none" stroke="#222" stroke-width="1.700"/><path fill="#968c20" stroke="#222" d="M5 8l2-2h6l2 2v9c0 3-10 3-10 0z"/><path fill="#d8d070" d="M7 8h2v10H7z"/></svg></button>
    </div>
  </div>
  <svg class="brand" viewBox="0 0 40 32" aria-label="DS CATIA"><path d="M13 2c6-3 8 0 4 4-2 2-4 3-7 4" fill="none" stroke="#d81e3a" stroke-width="2"/><path d="M4 12c8-1 9 8-2 11l3-9" fill="none" stroke="#2b2a6c" stroke-width="1.700"/><path d="M23 10c-6-1-8 3-4 5s1 7-6 6" fill="none" stroke="#eda020" stroke-width="2.500"/><text x="8" y="29">CATIA</text></svg>
  <a class="site" href="#">www.thefocuspath.com</a>
</div>

<footer class="status">
  <span class="msg">Applications/Product3 preselected</span>
  <input type="text" aria-label="Power input">
  <button class="sbtn" aria-label="Dialog"><svg viewBox="0 0 20 14"><path d="M4 2h8v6H4zM13 11h3V3" fill="none" stroke="#8a889a"/></svg></button>
  <button class="sbtn" aria-label="Information"><svg viewBox="0 0 20 14"><path fill="#222" d="M10 9h7v4h-7z"/><circle cx="10" cy="7" r="5.500" fill="#fff" stroke="#222" stroke-width="1.500"/><path d="M10 6v4M10 3v1.500" stroke="#2038b0" stroke-width="2"/></svg></button>
</footer>

<nav class="taskbar" aria-label="Taskbar">
  <button class="win" aria-label="Start menu"><svg viewBox="0 0 20 20"><path fill="#fff" d="M11 5l8-2v6h-8zM11 10h8v7l-8-1z"/></svg></button>
  <button aria-label="Search"><svg viewBox="0 0 20 20"><circle cx="12" cy="7" r="5" fill="none" stroke="#eee" stroke-width="1.500"/><path d="M8 11l-6 6" stroke="#eee" stroke-width="1.500"/></svg></button>
  <button aria-label="Cortana"><svg viewBox="0 0 20 20"><circle cx="10" cy="10" r="6.500" fill="none" stroke="#f2f2f2" stroke-width="1.800"/></svg></button>
  <button aria-label="Task view"><svg viewBox="0 0 20 20"><path d="M2 3v3h9V3M2 17v-3h9v3M2 8h9v4H2zM15 3v14" fill="none" stroke="#eee" stroke-width="1.200"/><path fill="#eee" d="M13.500 8h3v3h-3z"/></svg></button>
  <button aria-label="Chrome"><svg class="big" viewBox="0 0 20 20"><use href="#chrome" width="20" height="20"/></svg></button>
  <button aria-label="Chrome profile"><svg class="big" viewBox="0 0 20 20"><use href="#chrome" width="20" height="20"/><circle cx="15" cy="15" r="5" fill="#b9aa96"/><circle cx="15" cy="13" r="2" fill="#5a4030"/><path fill="#453b40" d="M11 19c1-4 7-4 8 0z"/></svg></button>
  <button class="running active" aria-label="CATIA"><svg class="big" viewBox="0 0 20 20"><path fill="#fff" d="M0 0h20v20H0z"/><use href="#catia" x="1" y="1" width="18" height="18"/></svg></button>
  <button class="running" aria-label="File Explorer"><svg class="big" viewBox="0 0 20 20"><path fill="#f0b632" d="M0 2h7l2 2h10v14H0z"/><path fill="#ffe08a" d="M0 6h20v12H0z"/><path fill="#4a90c8" d="M4 11h12v7h-3v-3H7v3H4z"/></svg></button>
  <button class="running" aria-label="Zoom"><svg class="big" viewBox="0 0 20 20"><rect width="20" height="20" rx="6" fill="#3c82f0"/><path fill="#fff" d="M4 7h6c1 0 2 1 2 2v4H6c-1 0-2-1-2-2zM13 9l3-2v6l-3-2z"/></svg></button>
  <div class="tray">
    <svg viewBox="0 0 20 20"><path d="M5 13l5-5 5 5" fill="none" stroke="#eee" stroke-width="1.400"/></svg>
    <svg viewBox="0 0 20 20"><path d="M3 4v3M6 4v3M2 7h5v3l-2 2" fill="none" stroke="#eee"/><path fill="#eee" d="M8 8h8v5H8z"/><path d="M6 6h12v8H6z" fill="none" stroke="#eee"/></svg>
    <svg viewBox="0 0 20 20"><path d="M5 16C5 10 9 6 15 6M8 16c0-4 3-7 7-7M11 16c0-2 2-4 4-4" fill="none" stroke="#ccc" stroke-width="1.200"/><circle cx="14" cy="15" r="1.500" fill="#fff"/></svg>
    <svg viewBox="0 0 20 20"><path fill="#f2f2f2" d="M5 15c-4 0-4-5 0-5 1-4 7-5 8-1 5-1 6 6 2 6z"/></svg>
    <svg viewBox="0 0 20 20"><path d="M3 8h3l3-3v10l-3-3H3zM11 8c1 1 1 3 0 4M13 6c2 2 2 6 0 8M15 4c3 3 3 9 0 12" fill="none" stroke="#ddd"/></svg>
    <span class="lang">ENG</span>
    <time datetime="2020-05-26T11:15"><span>11:15 AM</span><span>5/26/2020</span></time>
    <svg class="note" viewBox="0 0 20 20"><path fill="#f2f2f2" d="M3 3h14v11h-5l-3 3v-3H3z"/><path d="M5 6h10M5 8.500h10M5 11h6" stroke="#4a4a46"/><circle cx="15" cy="14" r="3.500" fill="#d8d8d8" stroke="#4a4a46"/></svg>
  </div>
</nav>

<svg class="watermark" viewBox="0 0 90 80" aria-label="FT Knowledge Connect"><path fill="#0b74bd" d="M29 0h46l-3 7H29L14 79H3L21 10c1-6 3-10 8-10z"/><path fill="#0c3f7f" d="M38 32h10l-7 34h-9z"/><path fill="#1683c8" d="M26 30h30l-2-3 9 5-9 5 2-4H25z"/><path fill="none" stroke="#1c4f8e" stroke-width="1.300" d="M46 8c17 6 16 18 5 23 12 5 10 16-5 22"/><text x="14" y="74">Knowledge Connect</text></svg>
</body>
</html>
```
FILE: styles.css
```css
*, *::before, *::after { box-sizing: border-box; }

:root {
  --lilac: #d0cde5;
  --space: #353163;
}

body {
  margin: 0;
  min-height: 100vh;
  display: flex;
  flex-direction: column;
  position: relative;
  overflow: hidden;
  background: var(--lilac);
  color: #26242e;
  font: 11px/16px "Open Sans", "Noto Sans", sans-serif;
}

button {
  display: flex;
  align-items: center;
  justify-content: center;
  padding: 0;
  border: 0;
  background: none;
  color: inherit;
  font: inherit;
}

svg { display: block; flex: none; }

.defs { position: absolute; width: 0; height: 0; }

/* title bar */
.titlebar {
  display: flex;
  align-items: center;
  height: 21px;
  padding-left: 3px;
  background: #fff;
}

.appicon { width: 13px; height: 13px; margin-right: 6px; }
.titlebar h1 { margin: 0; font-size: 11px; font-weight: 400; }
.winbtns { display: flex; margin-left: auto; }
.winbtns button { width: 43px; height: 20px; }
.winbtns svg { width: 11px; height: 11px; fill: none; stroke: #222; }

/* menu bar */
.menubar {
  display: flex;
  align-items: stretch;
  height: 19px;
  background: #d1cee4;
}

.docicon { width: 18px; height: 15px; margin: 2px 0 0 1px; }
.menubar > button { padding: 0 11px; }
.menubar > button:nth-of-type(odd) { padding-right: 10px; }
.menubar > .start { width: 44px; padding: 0 6px 0 0; background: #fae6c6; }
.menubar > .start + button { padding: 0 6px 0 8px; }
.menubar > .file { padding-left: 7px; }
.mdibtns { display: flex; margin-left: auto; background: #fff; }
.mdibtns button { width: 18px; }
.mdibtns svg { width: 10px; height: 10px; fill: none; stroke: #777; stroke-width: 2; }

/* toolbars */
.toolbar { background: linear-gradient(#fff, #e4e2f0 12%, var(--lilac) 30%, #cfcce2 80%, #aaa8be); }

.top {
  display: flex;
  height: 35px;
  padding: 3px 0 0 166px;
  border-bottom: 2px solid #66647c;
}

.group { display: flex; align-items: center; }

.group::before {
  content: "";
  align-self: flex-start;
  flex: none;
  width: 3px;
  height: 15px;
  margin-right: 5px;
  border-left: 2px solid #fff;
  border-right: 1px solid #aeabc2;
}

.group > button { position: relative; flex: 1 0 26px; height: 26px; }
.group svg { width: 20px; height: 20px; }
.constraints { width: 271px; margin-right: 15px; }
.structure { width: 298px; margin-right: 11px; }
.combos::before { margin-right: 8px; }
.combos > button { flex: 0 0 26px; }

.drop { position: relative; }

.drop::after {
  content: "";
  position: absolute;
  right: -2px;
  bottom: -2px;
  width: 8px;
  height: 4px;
  background: #111;
  clip-path: polygon(0 0, 100% 0, 50% 100%);
}

.combo { position: relative; width: 58px; margin-right: 5px; }
.combo.small { width: 37px; }
.combo.layer { margin-right: 1px; }

.combo select {
  display: block;
  width: 100%;
  height: 22px;
  padding: 0 15px 0 1px;
  appearance: none;
  overflow: hidden;
  border: 2px solid;
  border-color: #85838f #eeedf5 #eeedf5 #85838f;
  border-radius: 0;
  background: #fff;
  color: #26242e;
  font: inherit;
  text-overflow: clip;
}

.combo.first select { padding-left: 3px; }
.combo select:disabled { background: #f0eff5; color: #a5a3b0; opacity: 1; }

.combo::before {
  content: "";
  position: absolute;
  right: 1px;
  top: 2px;
  width: 15px;
  height: 18px;
  background: #ececf0;
  border-right: 1px solid #8e8c9a;
  border-bottom: 1px solid #8e8c9a;
  pointer-events: none;
}

.combo::after {
  content: "";
  position: absolute;
  right: 5px;
  top: 10px;
  width: 8px;
  height: 4px;
  background: #111;
  clip-path: polygon(0 0, 100% 0, 50% 100%);
  pointer-events: none;
}

.combo:has(:disabled)::after { background: #a5a3b0; }

/* text inside icons */
.serif { font: 700 12px "Liberation Serif", serif; }
.ic8 { font: 700 8px "Liberation Sans", sans-serif; }
.ic9 { font: 8px "Liberation Sans", sans-serif; }
.ic20 { font: 700 18px "Liberation Sans", sans-serif; fill: #14275c; }
.icfx { font: italic 700 18px "Liberation Serif", serif; }
.arg { font: 700 11px "Liberation Sans", sans-serif; }

.off { fill: none; stroke: #a7a5b6; stroke-width: 1.2; filter: drop-shadow(1px 1px 0 #fff); }
.thick { stroke-width: 2; }

/* work area */
.work { flex: 1; display: flex; min-height: 0; }

.viewport {
  position: relative;
  flex: 1;
  overflow: hidden;
  background: var(--space);
  box-shadow: inset 2px 0 #8c8a9e;
}

.model { position: absolute; inset: 0; width: 100%; height: 100%; }

.tree {
  position: absolute;
  left: 2px;
  top: 144px;
  margin: 0;
  padding: 0;
  list-style: none;
  color: #d9d7ec;
  font-size: 15px;
  line-height: 20px;
}

.tree li { position: relative; display: flex; align-items: center; height: 33px; padding-left: 24px; }
.tree li svg { width: 27px; height: 27px; margin-right: 4px; }
.tree .root { padding-left: 0; }
.tree span { white-space: nowrap; }
.tree .sel { border: 1px solid #e8f0ff; background: #0c6cf4; }
.tree .app { margin-left: -1px; padding: 1px 1px 2px; border-radius: 2px; background: #ff840c; }

.tree li:not(.root)::before {
  content: "";
  position: absolute;
  left: 8px;
  top: -16px;
  width: 15px;
  height: 33px;
  border-left: 2px solid #f0f0f8;
  border-bottom: 2px solid #f0f0f8;
}

.plus {
  position: absolute;
  left: 2px;
  top: 8px;
  width: 14px;
  height: 14px;
  border-radius: 50%;
  background: linear-gradient(#000, #000) center / 10px 3px no-repeat, linear-gradient(#000, #000) center / 3px 10px no-repeat, #77758a;
}

.pointer { position: absolute; left: 42px; top: 236px; width: 50px; height: 36px; z-index: 2; }

.compass { position: absolute; right: 45px; top: 15px; width: 110px; height: 120px; overflow: visible; }
.axis-lg { font: 34px "Open Sans", sans-serif; }
.triad { position: absolute; right: 7px; top: 450px; width: 44px; height: 50px; overflow: visible; }
.axis-sm { font: 13px "Open Sans", sans-serif; }

.palette { position: absolute; width: 34px; background: #d8d5ea; box-shadow: 1px 2px 8px #1d1a45; }
.annotations { right: 229px; top: 118px; }
.move { right: 146px; top: 201px; }

.ptitle {
  display: flex;
  align-items: center;
  height: 28px;
  padding: 2px 1px 0 7px;
  background: #fff;
}

.move .ptitle { padding-left: 5px; }
.ptitle b { flex: 1; font-weight: 400; }
.ptitle button { width: 18px; height: 18px; background: #c54d55; color: #fff; font-weight: 700; line-height: 14px; }

.ptools {
  display: flex;
  flex-direction: column;
  align-items: center;
  background: linear-gradient(90deg, #f2f1f9, #d3d0e6 25%, #d3d0e6 80%, #e8e6f4);
}

.ptools::before, .vgroup::before {
  content: "";
  align-self: flex-start;
  width: 16px;
  height: 3px;
  margin: 4px 0 2px 3px;
  border-top: 2px solid #fff;
  border-bottom: 1px solid #aeabc2;
}

.ptools button { width: 32px; height: 28px; }
.move .ptools button { height: 27px; }
.ptools svg, .dock svg { width: 20px; height: 20px; }
.ptools .drop::after { right: 1px; bottom: -2px; }

/* right-hand dock */
.dock {
  display: flex;
  flex-direction: column;
  gap: 9px;
  width: 35px;
  padding-top: 3px;
  border-left: 1px solid #fff;
  background: linear-gradient(90deg, #fff, #dedcec 18%, #d2cfe5 70%, #bcb9cf 96%, #a4a2b5);
}

.vgroup { display: flex; flex-direction: column; }
.vgroup::before { margin: 0 0 5px 3px; }
.vgroup button { height: 26px; }
.roomy { padding-bottom: 5px; }
.vgroup .drop::after { right: 2px; bottom: -1px; }

/* lower toolbars */
.bottom { position: relative; padding-top: 5px; border-bottom: 1px solid #5e5c70; }
.row { display: flex; }
.one { height: 37px; padding-left: 203px; }
.one .group, .two .group { align-self: flex-start; height: 28px; }
.std { width: 273px; margin-right: 17px; }
.viewtools { width: 327px; }
.two { gap: 11px; height: 30px; padding-left: 5px; }
.two .near { margin-left: -2px; }
.lit::before { content: ""; position: absolute; right: -3px; bottom: -3px; width: 10px; height: 6px; background: #fff; }

.brand { position: absolute; right: 6px; top: 2px; width: 40px; height: 32px; }
.brand text { font: italic 700 10px "Liberation Sans", sans-serif; fill: #2b2a6c; }

.site {
  position: absolute;
  right: 41px;
  top: 42px;
  color: #1762e6;
  font: 23px/28px "Liberation Sans", Arial, sans-serif;
  text-decoration: none;
  text-shadow: 0 1px 1px #6a7aa8;
}

/* status bar */
.status { display: flex; align-items: center; height: 22px; padding-right: 1px; background: #d1cee6; }
.msg { flex: 1; padding-left: 3px; }
.status input { width: 282px; height: 18px; border: 1px solid #77758a; border-right: 0; background: #fff; font: inherit; }
.sbtn { width: 30px; height: 18px; margin-left: 1px; background: #d8d5e8; border-right: 2px solid #f6f5fb; border-bottom: 1px solid #8c8a9c; }
.sbtn svg { width: 20px; height: 14px; }

/* taskbar */
.taskbar { display: flex; height: 38px; background: #494946; color: #f0f0f0; }
.taskbar > button { width: 46px; border-bottom: 2px solid transparent; }
.taskbar > .win { width: 44px; }
.taskbar svg { width: 20px; height: 20px; }
.taskbar .big { width: 21px; height: 21px; }
.taskbar > .running { border-bottom-color: #6fb4ea; }
.taskbar > .active { background: #757572; }
.tray { display: flex; align-items: center; margin-left: auto; padding-right: 21px; }
.tray > svg { width: 20px; height: 20px; margin-right: 2px; }
.lang { margin: 0 10px 0 6px; }
.tray time { display: flex; flex-direction: column; align-items: center; margin-right: 13px; }
.tray > .note { margin: 0; }

.watermark { position: absolute; left: 10px; bottom: 10px; width: 90px; height: 80px; pointer-events: none; overflow: visible; }
.watermark text { font: 700 7px "DejaVu Sans Mono", monospace; fill: #23364f; }
```
